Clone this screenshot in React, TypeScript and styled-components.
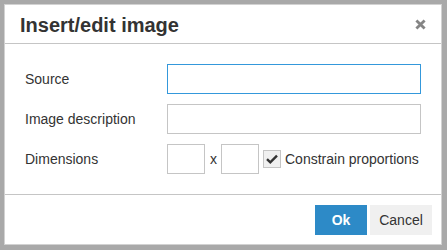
import React from "react";
import styled, { createGlobalStyle } from "styled-components";

const GlobalStyle = createGlobalStyle`
  html, body {
    margin: 0;
    padding: 0;
    background: #a9a9a9;
    font-family: "Liberation Sans", Arial, sans-serif;
    color: #333;
  }
`;

const Backdrop = styled.div`
  width: 447px;
  height: 250px;
  padding: 4px;
  box-sizing: border-box;
`;

const Dialog = styled.div`
  width: 438px;
  height: 241px;
  box-sizing: border-box;
  background: #fff;
  border: 1px solid #d2d2d2;
  display: flex;
  flex-direction: column;
`;

const Header = styled.div`
  height: 39px;
  box-sizing: border-box;
  border-bottom: 1px solid #c5c5c5;
  display: flex;
  align-items: center;
  justify-content: space-between;
  padding: 0 15px 0 15px;
`;

const Title = styled.h1`
  margin: 0;
  font-size: 20px;
  font-weight: 700;
  color: #333;
  line-height: 1;
  padding-top: 1px;
`;

const Close = styled.button`
  border: none;
  background: transparent;
  padding: 0;
  width: 12px;
  height: 12px;
  display: flex;
  align-items: center;
  justify-content: center;
  cursor: pointer;
`;

const Body = styled.div`
  height: 150px;
  box-sizing: border-box;
  padding: 20px 20px 20px 20px;
  display: flex;
  flex-direction: column;
  gap: 10px;
`;

const Row = styled.div`
  display: flex;
  align-items: center;
  height: 30px;
`;

const Label = styled.label`
  width: 142px;
  flex-shrink: 0;
  font-size: 14px;
  color: #333;
`;

const TextBox = styled.input<{ $focused?: boolean; $width?: number }>`
  box-sizing: border-box;
  height: 30px;
  width: ${({ $width }) => ($width ? `${$width}px` : "255px")};
  border: 1px solid ${({ $focused }) => ($focused ? "#3498db" : "#c5c5c5")};
  background: #fff;
  padding: 0 4px;
  margin: 0;
  font-family: inherit;
  font-size: 14px;
  outline: none;
`;

const Times = styled.span`
  font-size: 14px;
  margin: 0 4px 0 5px;
`;

const Check = styled.span`
  box-sizing: border-box;
  width: 18px;
  height: 18px;
  margin-left: 4px;
  border: 1px solid #c5c5c5;
  background: #f0f0f0;
  display: flex;
  align-items: center;
  justify-content: center;
`;

const CheckText = styled.span`
  font-size: 14px;
  margin-left: 4px;
  color: #333;
  white-space: nowrap;
`;

const Footer = styled.div`
  flex: 1;
  border-top: 1px solid #c5c5c5;
  display: flex;
  justify-content: flex-end;
  align-items: flex-start;
  gap: 3px;
  padding: 10px 9px 0 0;
`;

const Button = styled.button<{ $primary?: boolean }>`
  height: 30px;
  border: none;
  margin: 0;
  padding: 0;
  width: ${({ $primary }) => ($primary ? "52px" : "62px")};
  background: ${({ $primary }) => ($primary ? "#2d8ac7" : "#f0f0f0")};
  color: ${({ $primary }) => ($primary ? "#fff" : "#333")};
  font-family: inherit;
  font-size: 14px;
  font-weight: ${({ $primary }) => ($primary ? 700 : 400)};
  cursor: pointer;
`;

const App: React.FC = () => {
  return (
    <Backdrop>
      <GlobalStyle />
      <Dialog>
        <Header>
          <Title>Insert/edit image</Title>
          <Close aria-label="Close">
            <svg width="11" height="11" viewBox="0 0 11 11">
              <path d="M1.4 1.4 L9.6 9.6 M9.6 1.4 L1.4 9.6" stroke="#858585" strokeWidth="2.8" />
            </svg>
          </Close>
        </Header>
        <Body>
          <Row>
            <Label>Source</Label>
            <TextBox $focused />
          </Row>
          <Row>
            <Label>Image description</Label>
            <TextBox />
          </Row>
          <Row>
            <Label>Dimensions</Label>
            <TextBox $width={38} />
            <Times>x</Times>
            <TextBox $width={38} />
            <Check>
              <svg width="12" height="10" viewBox="0 0 12 10">
                <path d="M1 5.2 L4.3 8.3 L11 1.6" stroke="#333" strokeWidth="2.4" fill="none" />
              </svg>
            </Check>
            <CheckText>Constrain proportions</CheckText>
          </Row>
        </Body>
        <Footer>
          <Button $primary>Ok</Button>
          <Button>Cancel</Button>
        </Footer>
      </Dialog>
    </Backdrop>
  );
};

export default App;
